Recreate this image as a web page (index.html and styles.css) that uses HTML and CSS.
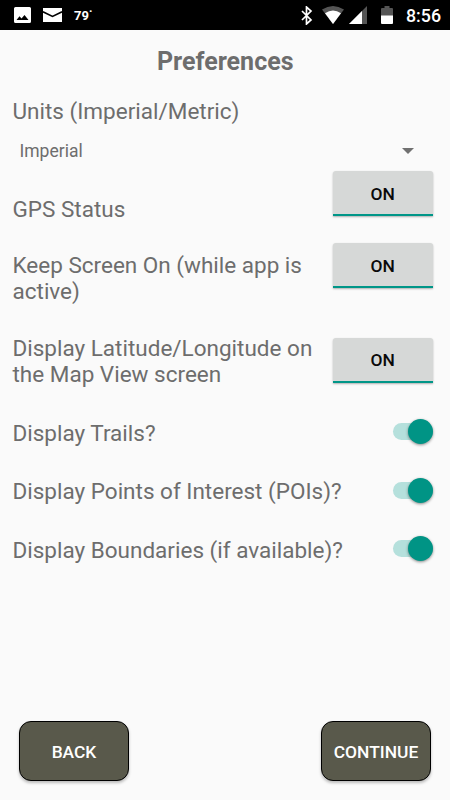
FILE: index.html
```html
<!DOCTYPE html>
<html lang="en">
<head>
<meta charset="utf-8">
<title>Preferences</title>
<link rel="stylesheet" href="styles.css">
</head>
<body>
<div class="screen">
  <header class="status">
    <svg class="ic-photo" width="17" height="16" viewBox="0 0 17 16"><path fill="#fff" fill-rule="evenodd" d="M1.5 0h14Q17 0 17 1.500v13Q17 16 15.500 16h-14Q0 16 0 14.500v-13Q0 0 1.500 0zM2.500 13h12l-4-5-3 3.500-2-2.200z"/></svg>
    <svg class="ic-mail" width="19" height="14" viewBox="0 0 19 14"><path fill="#fff" d="M0 0h19v14H0z"/><path d="M0 3.800l9.500 4.600L19 3.800" fill="none" stroke="#000" stroke-width="1.500"/></svg>
    <span class="temp">79˙</span>
    <svg class="ic-bt" width="12" height="19" viewBox="0 0 12 19"><path d="M1 5l9 9-4.500 4V1L10 5l-9 9" fill="none" stroke="#fff" stroke-width="1.700"/></svg>
    <svg class="ic-wifi" width="22" height="18" viewBox="0 0 22 18"><path fill="#555" d="M0 3.500Q11-3.500 22 3.500L11 18z"/><path fill="#fff" d="M3 7.300Q11 1.700 19 7.300L11 18z"/></svg>
    <svg class="ic-cell" width="18" height="18" viewBox="0 0 18 18"><path fill="#555" d="M18 0v18H0z"/><path fill="#fff" d="M13 5v13H0z"/></svg>
    <svg class="ic-batt" width="12" height="18" viewBox="0 0 12 18"><path fill="#555" d="M3.500 0h5v2H11q1 0 1 1v7H0V3q0-1 1-1h2.500z"/><path fill="#fff" d="M0 9.500h12V17q0 1-1 1H1q-1 0-1-1z"/></svg>
    <span class="clock">8:56</span>
  </header>
  <main class="prefs">
    <h1 class="title">Preferences</h1>
    <div class="label units">Units (Imperial/Metric)</div>
    <div class="select"><span>Imperial</span><svg width="12" height="6" viewBox="0 0 12 6"><path fill="#707070" d="M0 0h12L6 6z"/></svg></div>
    <div class="row gps"><div class="label">GPS Status</div><button class="toggle">ON</button></div>
    <div class="row keep"><div class="label">Keep Screen On (while app is<br>active)</div><button class="toggle">ON</button></div>
    <div class="row latlon"><div class="label">Display Latitude/Longitude on<br>the Map View screen</div><button class="toggle">ON</button></div>
    <div class="switches">
      <div class="switch-row"><div class="label">Display Trails?</div><div class="track"><div class="thumb"></div></div></div>
      <div class="switch-row"><div class="label">Display Points of Interest (POIs)?</div><div class="track"><div class="thumb"></div></div></div>
      <div class="switch-row"><div class="label">Display Boundaries (if available)?</div><div class="track"><div class="thumb"></div></div></div>
    </div>
  </main>
  <footer class="actions"><button class="action">BACK</button><button class="action">CONTINUE</button></footer>
</div>
</body>
</html>
```
FILE: styles.css
```css
* { box-sizing: border-box; }
body { margin: 0; font-family: Roboto, sans-serif; background: #fafafa; color: #6d6d6d; }
button { font-family: inherit; padding: 0; border: 0; }
svg { display: block; flex: none; }
.screen { width: 450px; height: 800px; display: flex; flex-direction: column; overflow: hidden; }

.status { height: 30px; flex: none; background: #000; color: #fff; display: flex; align-items: center; padding: 0 9px 0 14px; }
.ic-mail { margin-left: 12px; }
.temp { font-size: 13px; font-weight: 700; margin-left: 12px; }
.ic-bt { margin-left: auto; }
.ic-wifi { margin-left: 9px; }
.ic-cell { margin-left: 5px; }
.ic-batt { margin-left: 14px; }
.clock { font-size: 17.800px; font-weight: 500; width: 35px; margin-left: 13px; white-space: nowrap; }

.prefs { flex: 1; padding: 0 17px 0 12.500px; }
.title { margin: 0 -17px 0 -12px; height: 62px; line-height: 63px; font-size: 25px; font-weight: 700; text-align: center; }
.label { font-size: 22.500px; line-height: 26.400px; white-space: nowrap; }
.units { height: 40px; line-height: 38px; }
.select { height: 38px; display: flex; align-items: center; justify-content: space-between; padding: 0 19px 0 7px; font-size: 17.500px; }
.select svg { margin-top: -1px; }
.row { display: flex; justify-content: space-between; align-items: flex-start; }
.gps { height: 73px; padding-top: 1px; }
.gps .label { padding-top: 25px; }
.keep { height: 92px; }
.keep .label { padding-top: 9px; }
.latlon { height: 67px; }
.latlon .toggle { margin-top: 2.500px; }
.toggle { width: 100.500px; height: 45px; background: #d6d8d7; border-radius: 3px 3px 0 0; border-bottom: 2px solid #009688; box-shadow: 0 1px 2px rgba(0,0,0,.3); color: #0a0a0a; font-size: 17.400px; font-weight: 500; padding-top: 2px; }
.switch-row { display: flex; align-items: center; justify-content: space-between; height: 58.700px; }
.switch-row .label { padding-top: 3px; }
.track { width: 40px; height: 17px; border-radius: 9px; background: #b5e0dc; display: flex; align-items: center; justify-content: flex-end; }
.thumb { width: 25px; height: 25px; border-radius: 50%; background: #009485; box-shadow: 0 1px 3px rgba(0,0,0,.45); }

.actions { height: 79px; flex: none; display: flex; justify-content: space-between; padding: 0 19px; }
.action { width: 110px; height: 60px; border: 1px solid #000; border-radius: 12px; background: #59594b; color: #fff; font-size: 17.400px; font-weight: 500; padding-top: 1px; box-shadow: 0 2px 3px rgba(0,0,0,.25); }
```
